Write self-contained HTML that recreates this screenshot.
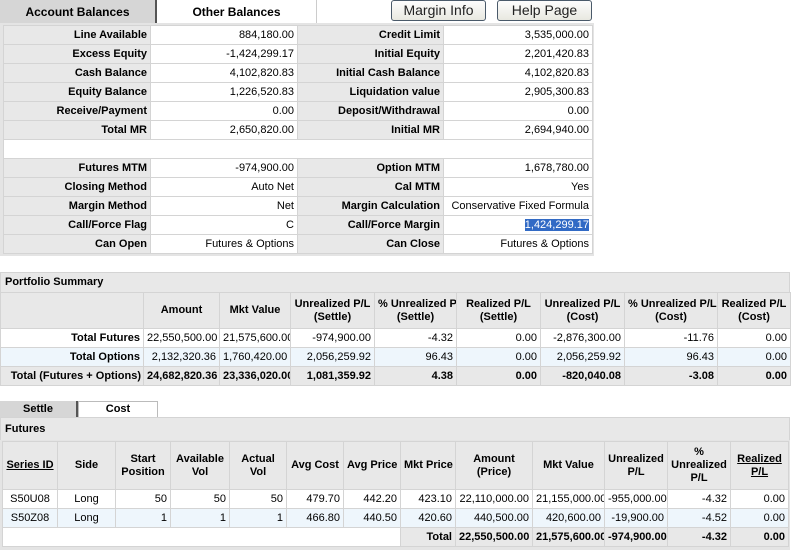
<!DOCTYPE html>
<html><head><style>
*{margin:0;padding:0;box-sizing:border-box}
body{width:791px;height:553px;background:#fff;font-family:"Liberation Sans",Tahoma,sans-serif;font-size:11px;color:#000;position:relative;overflow:hidden}
.a{position:absolute}
table{border-collapse:collapse;table-layout:fixed;position:absolute}
td{border:1px solid #d4d4d4;padding:0 3px;white-space:nowrap;overflow:hidden;height:19px}
.l{background:#e8e8e8;font-weight:bold;text-align:right}
.v{background:#fff;text-align:right}
.h{background:#e8e8e8;font-weight:bold;text-align:center;line-height:13px}
.b{font-weight:bold}
.r{text-align:right}.c{text-align:center}
.alt td{background:#eef6fc}
.tot td{background:#e8e8e8;font-weight:bold;text-align:right}
.bar{background:#e8e8e8;font-weight:bold;padding:3px 4px;border:1px solid #d4d4d4}
.btn{border:1px solid #4a5a6a;border-radius:3px;background:linear-gradient(#fdfdfd,#e8e8e0);font-size:14px;text-align:center;line-height:19px;color:#222}
u{text-decoration:underline}
</style></head><body>
<div class="a" style="left:0;top:0;width:157px;height:24px;background:#d6d6d6;border-right:2px solid #555;font-weight:bold;text-align:center;line-height:24px;font-size:12px">Account Balances</div>
<div class="a" style="left:157px;top:0;width:160px;height:24px;border-right:1px solid #ccc;font-weight:bold;text-align:center;line-height:24px;font-size:12px">Other Balances</div>
<div class="a btn" style="left:391px;top:0;width:95px;height:21px">Margin Info</div>
<div class="a btn" style="left:497px;top:0;width:95px;height:21px">Help Page</div>
<div class="a" style="left:0;top:23px;width:594px;height:233px;background:#e4e4e4"></div>
<table style="left:3px;top:25px;width:589px">
<col style="width:147px"><col style="width:147px"><col style="width:146px"><col style="width:149px">
<tr><td class="l">Line Available</td><td class="v">884,180.00</td><td class="l">Credit Limit</td><td class="v">3,535,000.00</td></tr>
<tr><td class="l">Excess Equity</td><td class="v">-1,424,299.17</td><td class="l">Initial Equity</td><td class="v">2,201,420.83</td></tr>
<tr><td class="l">Cash Balance</td><td class="v">4,102,820.83</td><td class="l">Initial Cash Balance</td><td class="v">4,102,820.83</td></tr>
<tr><td class="l">Equity Balance</td><td class="v">1,226,520.83</td><td class="l">Liquidation value</td><td class="v">2,905,300.83</td></tr>
<tr><td class="l">Receive/Payment</td><td class="v">0.00</td><td class="l">Deposit/Withdrawal</td><td class="v">0.00</td></tr>
<tr><td class="l">Total MR</td><td class="v">2,650,820.00</td><td class="l">Initial MR</td><td class="v">2,694,940.00</td></tr>
<tr><td colspan="4" style="background:#fff"></td></tr>
<tr><td class="l">Futures MTM</td><td class="v">-974,900.00</td><td class="l">Option MTM</td><td class="v">1,678,780.00</td></tr>
<tr><td class="l">Closing Method</td><td class="v">Auto Net</td><td class="l">Cal MTM</td><td class="v">Yes</td></tr>
<tr><td class="l">Margin Method</td><td class="v">Net</td><td class="l">Margin Calculation</td><td class="v">Conservative Fixed Formula</td></tr>
<tr><td class="l">Call/Force Flag</td><td class="v">C</td><td class="l">Call/Force Margin</td><td class="v"><span style="background:#316ac5;color:#fff">1,424,299.17</span></td></tr>
<tr><td class="l">Can Open</td><td class="v">Futures &amp; Options</td><td class="l">Can Close</td><td class="v">Futures &amp; Options</td></tr>
</table>

<div class="a bar" style="left:0;top:272px;width:790px;height:21px">Portfolio Summary</div>
<table style="left:0;top:292px;width:790px">
<col style="width:143px"><col style="width:76px"><col style="width:71px"><col style="width:84px"><col style="width:82px"><col style="width:84px"><col style="width:84px"><col style="width:93px"><col style="width:73px">
<tr style="height:36px"><td class="h"></td><td class="h">Amount</td><td class="h">Mkt Value</td><td class="h">Unrealized P/L<br>(Settle)</td><td class="h">% Unrealized P/L<br>(Settle)</td><td class="h">Realized P/L<br>(Settle)</td><td class="h">Unrealized P/L<br>(Cost)</td><td class="h">% Unrealized P/L<br>(Cost)</td><td class="h">Realized P/L<br>(Cost)</td></tr>
<tr class="r"><td class="b">Total Futures</td><td>22,550,500.00</td><td>21,575,600.00</td><td>-974,900.00</td><td>-4.32</td><td>0.00</td><td>-2,876,300.00</td><td>-11.76</td><td>0.00</td></tr>
<tr class="r alt"><td class="b">Total Options</td><td>2,132,320.36</td><td>1,760,420.00</td><td>2,056,259.92</td><td>96.43</td><td>0.00</td><td>2,056,259.92</td><td>96.43</td><td>0.00</td></tr>
<tr class="tot"><td style="padding:0 2px">Total (Futures + Options)</td><td>24,682,820.36</td><td>23,336,020.00</td><td>1,081,359.92</td><td>4.38</td><td>0.00</td><td>-820,040.08</td><td>-3.08</td><td>0.00</td></tr>
</table>

<div class="a" style="left:0;top:401px;width:78px;height:16px;background:#d6d6d6;border-right:2px solid #555;font-weight:bold;text-align:center;line-height:16px">Settle</div>
<div class="a" style="left:78px;top:401px;width:80px;height:16px;border:1px solid #bbb;border-bottom:none;font-weight:bold;text-align:center;line-height:14px">Cost</div>
<div class="a bar" style="left:0;top:417px;width:790px;height:24px;padding-top:5px">Futures</div>
<div class="a" style="left:0;top:440px;width:790px;height:110px;background:#e4e4e4"></div>
<table style="left:2px;top:441px;width:786px">
<col style="width:55px"><col style="width:58px"><col style="width:55px"><col style="width:59px"><col style="width:57px"><col style="width:57px"><col style="width:57px"><col style="width:55px"><col style="width:77px"><col style="width:72px"><col style="width:63px"><col style="width:63px"><col style="width:58px">
<tr style="height:48px"><td class="h"><u>Series ID</u></td><td class="h">Side</td><td class="h">Start<br>Position</td><td class="h">Available<br>Vol</td><td class="h">Actual<br>Vol</td><td class="h">Avg Cost</td><td class="h">Avg Price</td><td class="h">Mkt Price</td><td class="h">Amount<br>(Price)</td><td class="h">Mkt Value</td><td class="h">Unrealized<br>P/L</td><td class="h">%<br>Unrealized<br>P/L</td><td class="h"><u>Realized<br>P/L</u></td></tr>
<tr class="r" style="background:#fff"><td class="c">S50U08</td><td class="c">Long</td><td>50</td><td>50</td><td>50</td><td>479.70</td><td>442.20</td><td>423.10</td><td>22,110,000.00</td><td>21,155,000.00</td><td>-955,000.00</td><td>-4.32</td><td>0.00</td></tr>
<tr class="r alt"><td class="c">S50Z08</td><td class="c">Long</td><td>1</td><td>1</td><td>1</td><td>466.80</td><td>440.50</td><td>420.60</td><td>440,500.00</td><td>420,600.00</td><td>-19,900.00</td><td>-4.52</td><td>0.00</td></tr>
<tr class="tot"><td colspan="7" style="background:#fff"></td><td>Total</td><td>22,550,500.00</td><td>21,575,600.00</td><td>-974,900.00</td><td>-4.32</td><td>0.00</td></tr>
</table>
</body></html>
